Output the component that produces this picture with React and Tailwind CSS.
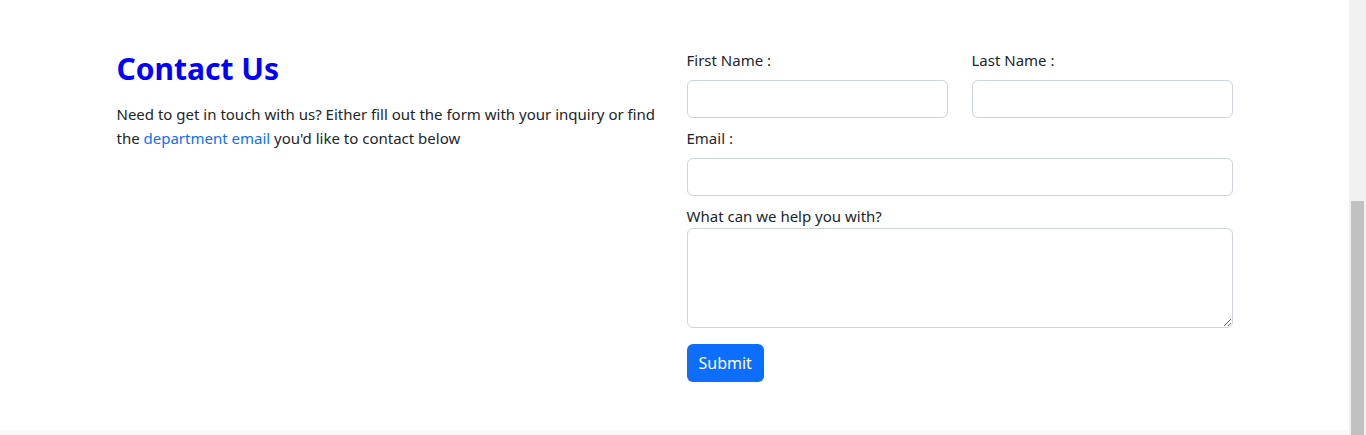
import React from 'react';

const Field = ({ label, children, className = '' }) => (
    <div className={className}>
        <label className="block mb-2 leading-6">{label}</label>
        {children}
    </div>
);

const inputCls = 'block w-full h-[38px] px-3 border border-[#ced4da] rounded-[6px] bg-white outline-none';

export default function App() {
    return (
        <div className="flex w-full h-[435px] overflow-hidden bg-white text-[#212529] text-[15px]" style={{ fontFamily: '"Noto Sans", "Open Sans", sans-serif' }}>
            <div className="flex-1 flex flex-col">
                {/* Contact section */}
                <section className="pt-12 pb-12">
                    <div className="w-[1140px] mx-auto flex">
                        {/* Left column */}
                        <div className="w-[570px] px-3">
                            <h1 className="text-[30px] font-bold leading-[1.2] text-[#0000ff] mt-[3px] mb-[15px]">Contact Us</h1>
                            <p className="leading-6">
                                Need to get in touch with us? Either fill out the form with your inquiry or find
                                the <a href="#" className="text-[#0d6efd]">department email</a> you'd like to contact below
                            </p>
                        </div>

                        {/* Right column: form */}
                        <div className="w-[570px] px-3">
                            <div className="grid grid-cols-2 gap-x-6">
                                <Field label="First Name :">
                                    <input type="text" className={inputCls} />
                                </Field>
                                <Field label="Last Name :">
                                    <input type="text" className={inputCls} />
                                </Field>
                            </div>
                            <Field label="Email :" className="mt-2">
                                <input type="email" className={inputCls} />
                            </Field>
                            <div className="mt-2">
                                <label className="block leading-6">What can we help you with?</label>
                                <textarea className="block w-full h-[100px] px-3 py-1.5 border border-[#ced4da] rounded-[6px] outline-none resize-y" />
                            </div>
                            <button className="mt-4 h-[38px] px-3 bg-[#0d6efd] text-white rounded-[6px] text-[16px]">Submit</button>
                        </div>
                    </div>
                </section>
                <div className="flex-1 bg-[#f8f9fa]" />
            </div>

            {/* Scrollbar */}
            <div className="w-[17px] flex flex-col bg-[#f1f1f1]">
                <div className="h-[201px]" />
                <div className="flex-1 mx-[2px] bg-[#c1c1c1]" />
            </div>
        </div>
    );
}
